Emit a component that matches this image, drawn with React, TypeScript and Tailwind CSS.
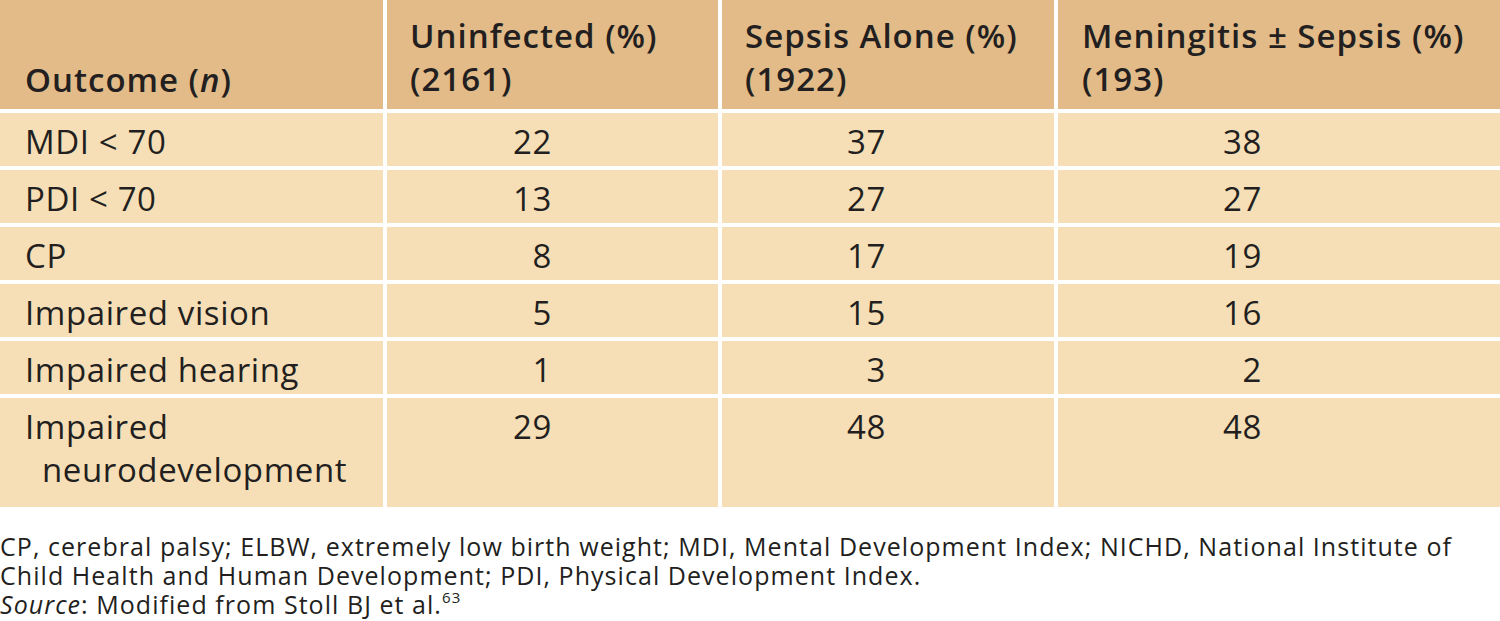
const rows = [
  { label: "MDI < 70", a: "22", b: "37", c: "38" },
  { label: "PDI < 70", a: "13", b: "27", c: "27" },
  { label: "CP", a: "8", b: "17", c: "19" },
  { label: "Impaired vision", a: "5", b: "15", c: "16" },
  { label: "Impaired hearing", a: "1", b: "3", c: "2" },
];

function NumCell({ value, width }: { value: string; width: string }) {
  return (
    <div className="bg-[#f6dfb7] pt-[7px]">
      <div className={`${width} text-right`}>{value}</div>
    </div>
  );
}

export default function App() {
  return (
    <div
      className="w-[1500px] h-[621px] bg-white text-[#231f20] overflow-hidden"
      style={{ fontFamily: '"Open Sans", "Liberation Sans", sans-serif' }}
    >
      {/* Table */}
      <div className="grid grid-cols-[383px_331px_332px_1fr] gap-[4px] text-[33px] leading-[43px] tracking-[0.6px]">
        {/* Header */}
        <div className="h-[109px] bg-[#e2bb88] pl-[25px] pb-[8px] flex items-end font-semibold tracking-[1px]">
          <span>
            Outcome (<i>n</i>)
          </span>
        </div>
        <div className="h-[109px] bg-[#e2bb88] pl-[23px] pb-[9px] flex items-end font-semibold tracking-[1px]">
          <span>
            Uninfected (%)
            <br />
            (2161)
          </span>
        </div>
        <div className="h-[109px] bg-[#e2bb88] pl-[23px] pb-[9px] flex items-end font-semibold tracking-[1px]">
          <span>
            Sepsis Alone (%)
            <br />
            (1922)
          </span>
        </div>
        <div className="h-[109px] bg-[#e2bb88] pl-[24px] pb-[9px] flex items-end font-semibold tracking-[1px]">
          <span>
            Meningitis ± Sepsis (%)
            <br />
            (193)
          </span>
        </div>

        {/* Body rows */}
        {rows.map((r) => (
          <div key={r.label} className="contents">
            <div className="h-[53px] bg-[#f6dfb7] pl-[25px] pt-[7px]">{r.label}</div>
            <NumCell value={r.a} width="w-[165px]" />
            <NumCell value={r.b} width="w-[164px]" />
            <NumCell value={r.c} width="w-[204px]" />
          </div>
        ))}

        <div className="h-[109px] bg-[#f6dfb7] pl-[42px] -indent-[17px] pt-[7px]">
          Impaired neurodevelopment
        </div>
        <NumCell value="29" width="w-[165px]" />
        <NumCell value="48" width="w-[164px]" />
        <NumCell value="48" width="w-[204px]" />
      </div>

      {/* Footnote */}
      <div className="mt-[25px] text-[25px] leading-[29px] tracking-[1.05px] whitespace-nowrap">
        <div>
          CP, cerebral palsy; ELBW, extremely low birth weight; MDI, Mental Development Index; NICHD, National Institute of
        </div>
        <div>Child Health and Human Development; PDI, Physical Development Index.</div>
        <div>
          <i>Source</i>: Modified from Stoll BJ et al.
          <span className="text-[15px] leading-none align-top">63</span>
        </div>
      </div>
    </div>
  );
}
